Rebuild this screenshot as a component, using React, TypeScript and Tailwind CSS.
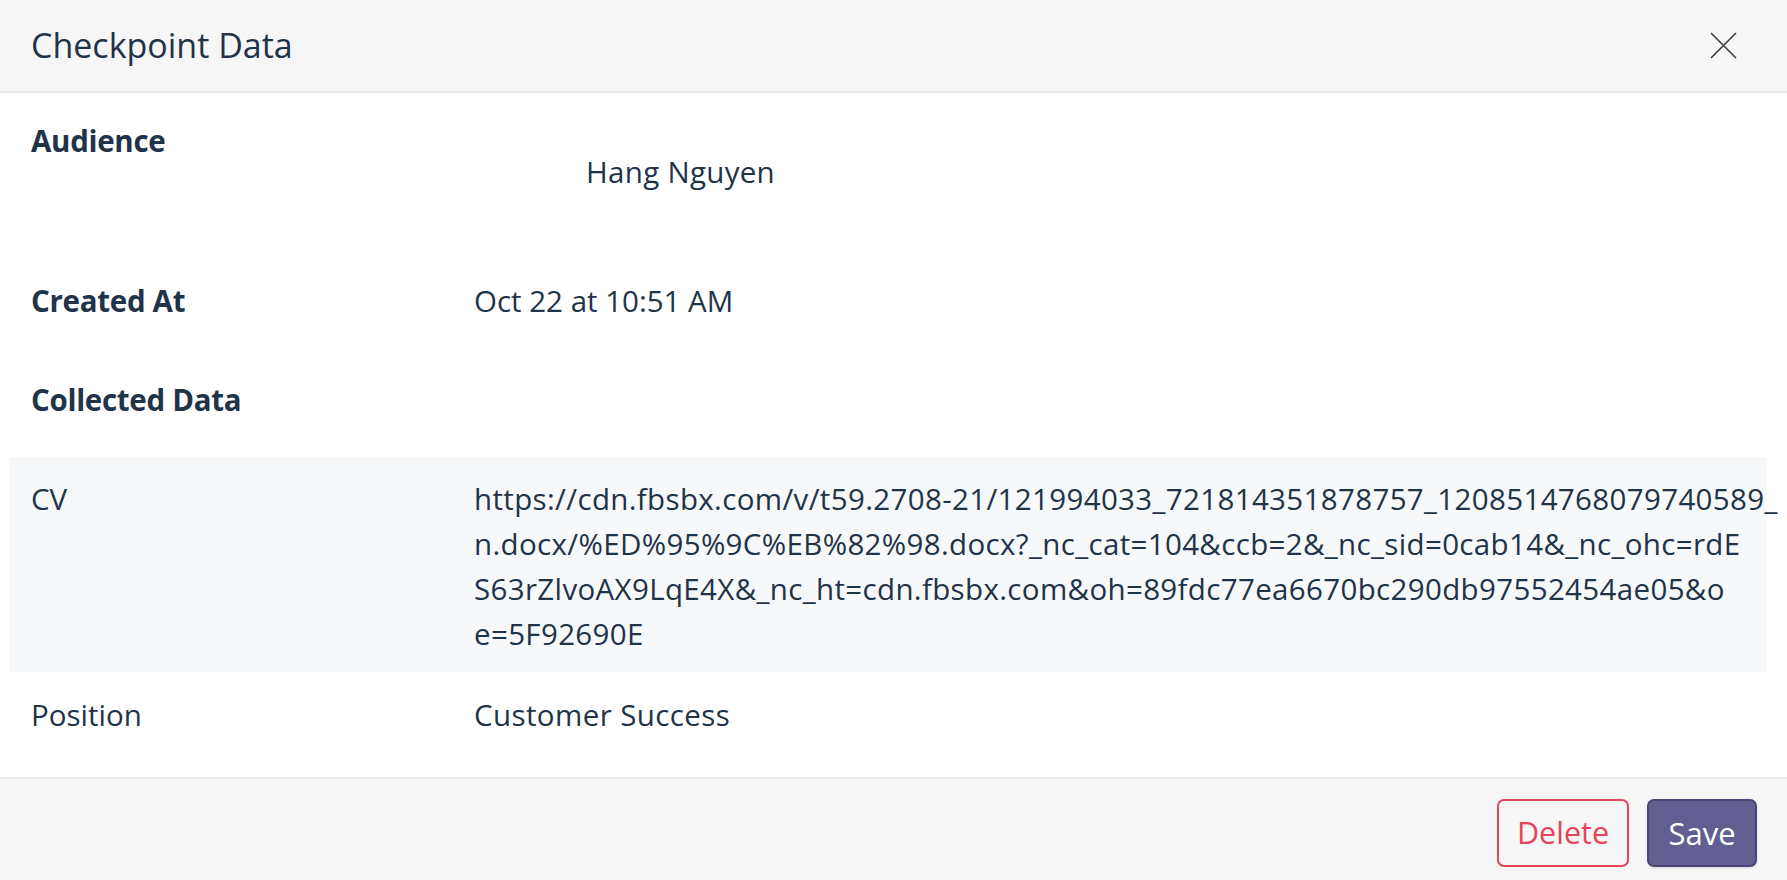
import React from "react";

const cvLines = [
  "https://cdn.fbsbx.com/v/t59.2708-21/121994033_721814351878757_1208514768079740589_",
  "n.docx/%ED%95%9C%EB%82%98.docx?_nc_cat=104&ccb=2&_nc_sid=0cab14&_nc_ohc=rdE",
  "S63rZlvoAX9LqE4X&_nc_ht=cdn.fbsbx.com&oh=89fdc77ea6670bc290db97552454ae05&o",
  "e=5F92690E",
];

const CloseIcon = () => (
  <svg width="27" height="27" viewBox="0 0 27 27" fill="none">
    <path d="M1 1L26 26M26 1L1 26" stroke="#3a3a3a" strokeWidth="1.6" />
  </svg>
);

export default function App() {
  return (
    <div className="w-full h-[880px] flex flex-col bg-white text-[#1f3349] font-['Open_Sans',sans-serif]">
      <header className="h-[93px] shrink-0 bg-[#f6f6f6] border-b-2 border-[#e8e9ec] flex items-center justify-between pl-[31px] pr-[50px]">
        <h1 className="text-[34px] font-normal">Checkpoint Data</h1>
        <button className="p-0">
          <CloseIcon />
        </button>
      </header>

      <main className="flex-1 flex flex-col text-[29.5px]">
        <div className="flex pt-[32px] pl-[31px]">
          <div className="w-[443px] font-bold leading-8 tracking-[-0.3px]">Audience</div>
          <div className="pl-[112px] pt-[31px] leading-8 tracking-[0.3px]">Hang Nguyen</div>
        </div>

        <div className="flex mt-[97px] pl-[31px] leading-8">
          <div className="w-[443px] font-bold tracking-[-0.3px]">Created At</div>
          <div>Oct 22 at 10:51 AM</div>
        </div>

        <div className="mt-[67px] pl-[31px] leading-8 font-bold tracking-[-0.3px]">Collected Data</div>

        <div className="mt-[41px] ml-[9px] mr-[20px] bg-[#f7f8fa] flex pl-[22px] pt-[19px] pb-[16px] leading-[45px]">
          <div className="w-[443px] shrink-0">CV</div>
          <div className="flex flex-col tracking-[0.35px]">
            {cvLines.map((l) => (
              <span key={l} className="whitespace-nowrap">{l}</span>
            ))}
          </div>
        </div>

        <div className="flex pl-[31px] pt-[20px] leading-[45px]">
          <div className="w-[443px] shrink-0">Position</div>
          <div className="tracking-[0.4px]">Customer Success</div>
        </div>
      </main>

      <footer className="h-[103px] shrink-0 bg-[#f6f6f6] border-t-2 border-[#e8e9ec] flex justify-end items-start gap-[18px] pt-[20px] pr-[30px]">
        <button className="w-[132px] h-[68px] rounded-[7px] border-2 border-[#e5445a] text-[#e5445a] text-[30.5px]">
          Delete
        </button>
        <button className="w-[110px] h-[68px] rounded-[7px] border-2 border-[#4a4777] bg-[#625e91] text-white text-[31px] shadow-sm">
          Save
        </button>
      </footer>
    </div>
  );
}
